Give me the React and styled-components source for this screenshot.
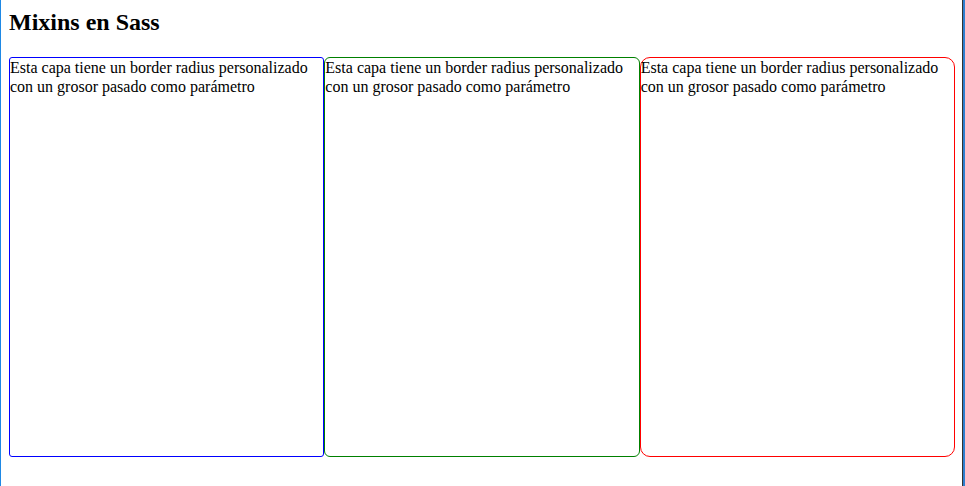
import React from 'react';
import styled, { createGlobalStyle } from 'styled-components';

const GlobalStyle = createGlobalStyle`
  html {
    min-height: 100vh;
    padding: 0 2px 0 1px;
    box-sizing: border-box;
    box-shadow: inset 1px 0 #1e88e5, inset -2px 0 #2f7fcf, inset -3px 0 #333;
  }
  body {
    margin: 8px;
    font-family: "Liberation Serif", "Times New Roman", serif;
    font-size: 16px;
    color: #000;
    background: #fff;
  }
`;

const Title = styled.h2`
  font-size: 24px;
  font-weight: bold;
  margin: 1px 0 21px;
`;

const Row = styled.div`
  display: flex;
`;

const Layer = styled.div`
  box-sizing: border-box;
  width: 33.3333%;
  height: 400px;
  line-height: 19px;
  border: 1px solid ${props => props.color};
  border-radius: ${props => props.radius}px;
`;

const layers = [
  { color: '#0000ff', radius: 3 },
  { color: '#008000', radius: 6 },
  { color: '#ff0000', radius: 10 }
];

const App = () => (
  <>
    <GlobalStyle />
    <Title>Mixins en Sass</Title>
    <Row>
      {layers.map(layer => (
        <Layer key={layer.color} color={layer.color} radius={layer.radius}>
          Esta capa tiene un border radius personalizado con un grosor pasado como parámetro
        </Layer>
      ))}
    </Row>
  </>
);

export default App;
